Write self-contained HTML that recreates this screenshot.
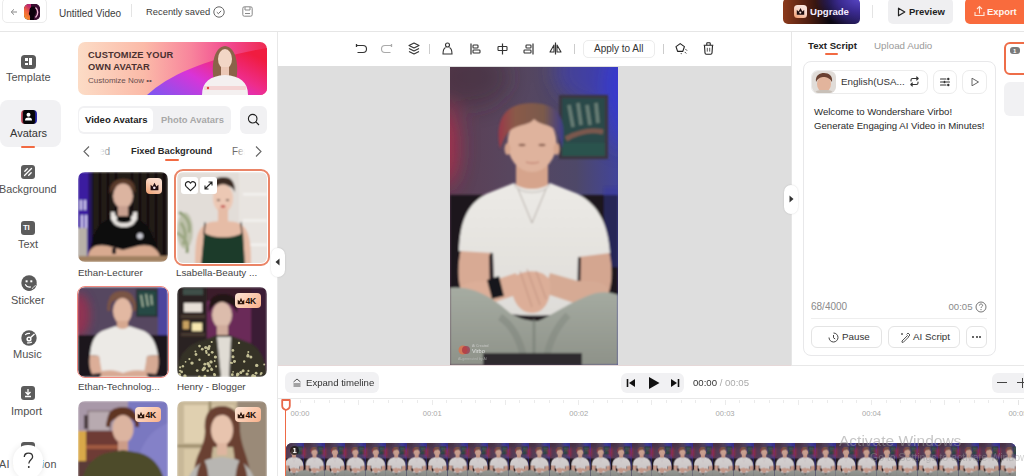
<!DOCTYPE html>
<html><head><meta charset="utf-8">
<style>
*{box-sizing:border-box;margin:0;padding:0}
html,body{width:1024px;height:476px;overflow:hidden;background:#fff}
body{position:relative;font-family:"Liberation Sans",sans-serif;color:#333}
.a{position:absolute}
.t{position:absolute;white-space:nowrap;line-height:1}
svg{display:block}
</style></head><body>

<!-- ============ HEADER ============ -->
<div class="a" style="left:0;top:31px;width:1024px;height:1px;background:#e6e6e6"></div>
<div class="a" style="left:2px;top:-2px;width:45px;height:25px;border:1px solid #ececec;border-radius:5px"></div>
<svg class="a" style="left:10px;top:8px" width="8" height="8" viewBox="0 0 8 8"><path d="M7 4H1.5M4 1.3L1.2 4 4 6.7" fill="none" stroke="#888" stroke-width="1"/></svg>
<div class="a" style="left:24px;top:4px;width:15.5px;height:15.5px;border-radius:5px;overflow:hidden;background:#3a1030"><svg width="16" height="16" viewBox="0 0 16 16"><defs><linearGradient id="lg1" x1="0" y1="1" x2="0.4" y2="0"><stop offset="0" stop-color="#f8a020"/><stop offset="0.6" stop-color="#f06040"/><stop offset="1" stop-color="#c02a70"/></linearGradient><filter id="lgb"><feGaussianBlur stdDeviation="0.35"/></filter></defs><g filter="url(#lgb)"><rect width="16" height="16" fill="#3a1030"/><rect width="7" height="16" fill="url(#lg1)"/><path d="M6 16C6 13 6.5 12 5 10.5 4.5 9 5.5 8.5 5.5 7 5.5 3.5 7.5 2.5 9.5 2.5 11 2.5 12 4 12 6.5 12 9 11 11 10 12.5L10 16Z" fill="#0a0408"/><path d="M11.5 3.5C14.5 6 14.5 10.5 11.5 13.5" fill="none" stroke="#f4b8d8" stroke-width="1.3"/></g></svg></div>
<div class="t" style="left:59px;top:8.5px;font-size:10px;color:#3c3c3c">Untitled Video</div>
<div class="a" style="left:131px;top:4px;width:1px;height:13px;background:#e4e4e4"></div>
<div class="t" style="left:146px;top:7px;font-size:9.4px;color:#3c3c3c">Recently saved</div>
<svg class="a" style="left:213px;top:6px" width="12" height="12" viewBox="0 0 12 12"><circle cx="6" cy="6" r="5.2" fill="none" stroke="#555" stroke-width="0.9"/><path d="M3.8 6.2l1.6 1.5 2.8-2.9" fill="none" stroke="#555" stroke-width="0.9"/></svg>
<svg class="a" style="left:242px;top:6px" width="11" height="11" viewBox="0 0 11 11"><rect x="0.8" y="0.8" width="9.4" height="9.4" rx="1.5" fill="none" stroke="#888" stroke-width="1"/><path d="M3 1v3h5V1M3 7.5h5" fill="none" stroke="#888" stroke-width="1"/></svg>

<div class="a" style="left:783px;top:-2px;width:77px;height:25.5px;border-radius:5px;background:radial-gradient(ellipse 60px 40px at 100% 0%,#5a48c8 0%,#3a2a90 35%,transparent 75%),linear-gradient(90deg,#8c3a1c 0%,#4a1c10 35%,#0c0810 60%,#201850 100%)"></div>
<div class="a" style="left:794px;top:5px;width:13px;height:13px;border-radius:3.5px;background:linear-gradient(30deg,#f09868,#f8d8cc 55%,#faeae4)"></div>
<svg class="a" style="left:796px;top:7px" width="9" height="9" viewBox="0 0 9 9"><path d="M0.8 7.8V3L2.7 4.6 4.5 1 6.3 4.6 8.2 3V7.8Z" fill="#1a0a0c"/><circle cx="4.3" cy="5.6" r="1.1" fill="#f0dcd8"/></svg>
<div class="t" style="left:810px;top:7px;font-size:9.6px;font-weight:700;color:#f4eeff">Upgrade</div>
<div class="a" style="left:872px;top:5px;width:1px;height:13px;background:#e4e4e4"></div>
<div class="a" style="left:888px;top:-2px;width:65px;height:25.5px;border-radius:5px;background:#efeff1"></div>
<svg class="a" style="left:897px;top:7px" width="9" height="10" viewBox="0 0 9 10"><path d="M1.5 1.2L7.8 5 1.5 8.8Z" fill="none" stroke="#222" stroke-width="1.2" stroke-linejoin="round"/></svg>
<div class="t" style="left:909px;top:7px;font-size:9.5px;font-weight:700;color:#1e1e1e">Preview</div>
<div class="a" style="left:965px;top:-2px;width:70px;height:25.5px;border-radius:5px;background:#f96b3d"></div>
<svg class="a" style="left:974px;top:5px" width="11" height="12" viewBox="0 0 11 12"><path d="M5.5 8.5V1.5M3 4l2.5-2.5L8 4M1 7v3.5h9V7" fill="none" stroke="#ffe6d8" stroke-width="1.1"/></svg>
<div class="t" style="left:987px;top:7px;font-size:9.4px;font-weight:700;color:#fff5ee">Export</div>

<!-- ============ LEFT NAV ============ -->
<div class="a" style="left:0;top:100px;width:61px;height:47px;border-radius:8px;background:#f1f1f3"></div>
<div class="a" style="left:21px;top:146px;width:14px;height:2px;border-radius:1px;background:#f26a42"></div>
<!-- template -->
<div class="a" style="left:21.3px;top:54.6px;width:14.4px;height:14px;border-radius:3.5px;background:#5a5a5a"></div>
<div class="a" style="left:25px;top:58px;width:2.6px;height:2.8px;background:#fff"></div><div class="a" style="left:25px;top:63px;width:2.6px;height:2.4px;background:#fff"></div><div class="a" style="left:29.4px;top:58px;width:2.5px;height:7.4px;background:#fff"></div>
<div class="t" style="left:6px;top:72px;font-size:11px;color:#505050">Template</div>
<!-- avatars -->
<div class="a" style="left:20.5px;top:110px;width:16px;height:14px;border-radius:4px;background:linear-gradient(90deg,#e06070,#300a14 25%,#050508 45%,#050508 70%,#3030c0)"></div>
<div class="a" style="left:22.5px;top:110px;width:12px;height:14px;border-radius:3px;background:#050508"></div>
<svg class="a" style="left:23px;top:111px" width="11" height="11" viewBox="0 0 11 11"><circle cx="5.5" cy="3.8" r="2" fill="#fff"/><path d="M2 9.5C2 7 3.5 6.4 5.5 6.4S9 7 9 9.5Z" fill="#fff"/></svg>
<div class="t" style="left:10px;top:128px;font-size:11px;color:#333">Avatars</div>
<!-- background -->
<div class="a" style="left:21px;top:165px;width:14px;height:14px;border-radius:3px;background:#5c5c5c"></div>
<svg class="a" style="left:21px;top:165px" width="14" height="14" viewBox="0 0 14 14"><path d="M3.8 6.3L6.3 3.8M3.5 10.5L10.5 3.5M7.7 10.2L10.2 7.7" stroke="#fff" stroke-width="1.3" stroke-linecap="round"/></svg>
<div class="t" style="left:-1px;top:184px;font-size:10.8px;color:#505050">Background</div>
<!-- text -->
<div class="a" style="left:21px;top:221px;width:14px;height:14px;border-radius:3px;background:#5c5c5c"></div>
<div class="t" style="left:23px;top:224px;font-size:8px;font-weight:700;color:#fff;letter-spacing:-0.3px">TI</div>
<div class="t" style="left:18px;top:239px;font-size:11px;color:#505050">Text</div>
<!-- sticker -->
<svg class="a" style="left:20.5px;top:275px" width="16" height="16" viewBox="0 0 16 16"><path d="M8 0.3A7.7 7.7 0 1 1 3 13.8L5 12 Q8 14 11 11.5 Q12.5 10 15.6 9 A7.7 7.7 0 0 0 8 0.3Z" fill="#5a5a5a"/><circle cx="8" cy="8" r="7.7" fill="#5a5a5a"/><rect x="4.6" y="5.3" width="2" height="2" fill="#fff"/><rect x="9.3" y="5.3" width="2" height="2" fill="#fff"/><path d="M4.5 9.8Q6 12.6 9.3 12" fill="none" stroke="#fff" stroke-width="1.3" stroke-linecap="round"/><path d="M15 10.5Q12.5 11 11 14" fill="none" stroke="#fff" stroke-width="0.7"/></svg>
<div class="t" style="left:11px;top:295px;font-size:11px;color:#505050">Sticker</div>
<!-- music -->
<svg class="a" style="left:20.5px;top:330px" width="16" height="16" viewBox="0 0 16 16"><circle cx="8" cy="8" r="7.7" fill="#5a5a5a"/><path d="M4.5 4.6Q6 3.3 8.5 3.4M6.5 12.8Q8.5 13.3 10.5 12.2" fill="none" stroke="#fff" stroke-width="1.2" stroke-linecap="round"/><circle cx="8" cy="9" r="2.6" fill="#fff"/><path d="M8 9L13.5 4" stroke="#fff" stroke-width="1.4"/><circle cx="8" cy="9" r="1.1" fill="#5a5a5a"/></svg>
<div class="t" style="left:13px;top:349px;font-size:11px;color:#505050">Music</div>
<!-- import -->
<div class="a" style="left:21px;top:386px;width:14px;height:14px;border-radius:3px;background:#5c5c5c"></div>
<svg class="a" style="left:21px;top:386px" width="14" height="14" viewBox="0 0 14 14"><path d="M7 3v5M4.5 6L7 8.5 9.5 6M4 10.5h6" fill="none" stroke="#fff" stroke-width="1.3"/></svg>
<div class="t" style="left:11px;top:406px;font-size:11px;color:#505050">Import</div>
<!-- ai creation -->
<div class="a" style="left:21px;top:442px;width:14px;height:14px;border-radius:3px;background:#5c5c5c"></div>
<div class="t" style="left:-1px;top:459px;font-size:10.8px;color:#505050;letter-spacing:0.35px">AI Creation</div>
<div class="a" style="left:13px;top:445px;width:30px;height:34px;border-radius:15px;background:#fff;box-shadow:0 0 6px rgba(0,0,0,0.10)"></div>
<svg class="a" style="left:22px;top:452px" width="13" height="17" viewBox="0 0 13 17"><path d="M2.3 5C2.3 2.6 4.2 1.2 6.4 1.2 8.8 1.2 10.6 2.8 10.6 5 10.6 7.6 6.8 8.2 6.8 11.5" fill="none" stroke="#333" stroke-width="1.3"/><circle cx="6.8" cy="15" r="0.9" fill="#222"/></svg>


<!-- ============ LEFT PANEL ============ -->
<div class="a" style="left:277px;top:32px;width:1px;height:444px;background:#e8e8e8"></div>
<!-- banner -->
<div class="a" style="left:78px;top:42px;width:189px;height:53px;border-radius:7px;overflow:hidden">
 <svg width="189" height="53" viewBox="0 0 189 53"><defs>
 <linearGradient id="bn0" x1="0" y1="0" x2="1" y2="0"><stop offset="0" stop-color="#fcdcc6"/><stop offset="0.35" stop-color="#fbbaa8"/><stop offset="0.6" stop-color="#f8849c"/><stop offset="0.8" stop-color="#f24890"/><stop offset="1" stop-color="#ee2a50"/></linearGradient>
 <linearGradient id="bn1" x1="0" y1="1" x2="1" y2="0.3"><stop offset="0" stop-color="#7a58f2"/><stop offset="0.45" stop-color="#d834d8"/><stop offset="0.7" stop-color="#ee2c8a"/><stop offset="1" stop-color="#f01c40"/></linearGradient>
 <filter id="bl1" x="-20%" y="-20%" width="140%" height="140%"><feGaussianBlur stdDeviation="0.7"/></filter></defs>
 <rect width="189" height="53" fill="url(#bn0)"/>
 <path d="M69 53C92 32 130 16 189 6V53Z" fill="url(#bn1)"/>
 <g filter="url(#bl1)">
 <path d="M136 38C133 26 135 5 147 4 159 5 161 26 158 38Z" fill="#8a6448"/>
 <ellipse cx="147" cy="17" rx="7" ry="10" fill="#f2d6c6"/>
 <rect x="143" y="25" width="8" height="10" fill="#ecc8b6"/>
 <path d="M124 53C124 40 132 34 147 33 162 34 170 40 170 53Z" fill="#f4f0f0"/>
 <rect x="126" y="44" width="42" height="4" rx="1" fill="#f4d4d4"/>
 <circle cx="130" cy="46" r="1.2" fill="#e04040"/>
 </g>
 </svg>
</div>
<div class="t" style="left:88px;top:51px;font-size:9.3px;font-weight:700;color:#4a3030;letter-spacing:0.1px">CUSTOMIZE YOUR</div>
<div class="t" style="left:88px;top:63px;font-size:9.3px;font-weight:700;color:#4a3030;letter-spacing:0.1px">OWN AVATAR</div>
<div class="t" style="left:88px;top:77px;font-size:8px;color:#6a5050">Customize Now ••</div>
<!-- tabs -->
<div class="a" style="left:78px;top:106px;width:153px;height:28px;border-radius:6px;background:#f1f1f3"></div>
<div class="a" style="left:79px;top:108px;width:74px;height:24px;border-radius:5px;background:#fff"></div>
<div class="t" style="left:85px;top:115px;font-size:9.5px;font-weight:700;color:#222">Video Avatars</div>
<div class="t" style="left:161px;top:115px;font-size:9.4px;font-weight:700;color:#a8a8a8">Photo Avatars</div>
<div class="a" style="left:240px;top:106px;width:27px;height:28px;border-radius:6px;background:#f1f1f3"></div>
<svg class="a" style="left:247px;top:113px" width="13" height="13" viewBox="0 0 13 13"><circle cx="5.7" cy="5.7" r="4.3" fill="none" stroke="#222" stroke-width="1.1"/><path d="M9 9l3 3" stroke="#222" stroke-width="1.1"/></svg>
<!-- category -->
<svg class="a" style="left:82px;top:145px" width="9" height="13" viewBox="0 0 9 13"><path d="M7 1.5L2 6.5 7 11.5" fill="none" stroke="#666" stroke-width="1.1"/></svg>
<div class="t" style="left:99px;top:146.5px;font-size:10px;color:#6a6a6a">ed</div>
<div class="a" style="left:92px;top:140px;width:20px;height:20px;background:linear-gradient(90deg,#fff 40%,rgba(255,255,255,0) 100%)"></div>
<div class="t" style="left:131px;top:147px;font-size:9.3px;font-weight:700;color:#2a2a2a">Fixed Background</div>
<div class="a" style="left:165px;top:159px;width:14px;height:2px;border-radius:1px;background:#f26a42"></div>
<div class="t" style="left:232px;top:146.5px;font-size:10px;color:#6a6a6a">Fea</div>
<div class="a" style="left:236px;top:140px;width:18px;height:20px;background:linear-gradient(90deg,rgba(255,255,255,0),#fff 50%)"></div>
<svg class="a" style="left:254px;top:145px" width="9" height="13" viewBox="0 0 9 13"><path d="M2 1.5L7 6.5 2 11.5" fill="none" stroke="#666" stroke-width="1.1"/></svg>
<div class="a" style="left:78px;top:172px;width:90px;height:90px;border-radius:7px;overflow:hidden;"><svg width="90" height="90" viewBox="0 0 90 90" preserveAspectRatio="none"><defs><filter id="f1" x="-10%" y="-10%" width="120%" height="120%"><feGaussianBlur stdDeviation="1.2"/></filter></defs><g filter="url(#f1)">
<rect width="90" height="90" fill="#241a18"/>
<path d="M14 0V90M22 0V90M30 0V90M38 0V90M54 0V90M62 0V90M70 0V90M78 0V90M86 0V90" stroke="#120c0c" stroke-width="3"/>
<rect x="0" y="0" width="11" height="90" fill="#3a1aa0"/>
<rect x="10" y="0" width="4" height="90" fill="#2a1870" opacity="0.8"/>
<path d="M3 28L3 38M7 28L7 38M4 43V56M8 43V56" stroke="#e8e0ff" stroke-width="1.8"/>
<rect x="0" y="56" width="9" height="34" fill="#b8b0a8"/>
<path d="M32 22C31 10 38 7 46 7 54 7 58 11 57 22 55 16 50 14 45 14 40 14 35 16 32 22Z" fill="#5a3a2a"/>
<ellipse cx="45" cy="24" rx="10" ry="12.5" fill="#dcb4a0"/>
<rect x="40" y="34" width="10" height="10" fill="#c8a090"/>
<path d="M12 90C12 62 20 50 34 46L45 44 56 46C70 50 78 62 80 90Z" fill="#0e0c10"/>
<path d="M35 40C34 50 39 53 46 53 53 53 58 50 57 40" fill="none" stroke="#e4e0dc" stroke-width="4"/>
<circle cx="36" cy="46" r="3" fill="#ece8e4"/><circle cx="56" cy="46" r="3" fill="#ece8e4"/>
<circle cx="62" cy="64" r="3" fill="#c8c8d0"/>
<path d="M10 84C12 74 20 72 30 74L45 78 60 74C70 72 78 74 82 84Z" fill="#d8aa90"/>
<rect x="0" y="84" width="90" height="6" fill="#a08060"/>
<rect x="34" y="76" width="4" height="6" fill="#18181a"/>
</g></svg></div>
<div class="a" style="left:146px;top:178px;width:16px;height:16px;border-radius:4px;background:linear-gradient(30deg,#f0a070,#f8d4c0 60%,#fae0d4)"></div><svg class="a" style="left:149.5px;top:181.5px" width="9" height="9" viewBox="0 0 9 9"><path d="M0.6 8.2V2.8L2.6 4.6 4.5 0.8 6.4 4.6 8.4 2.8V8.2Z" fill="#1e0c10"/><circle cx="4.3" cy="5.8" r="1.3" fill="#f4e8f0"/></svg><div class="t" style="left:78px;top:268px;font-size:9.8px;color:#444">Ethan-Lecturer</div>
<div class="a" style="left:174px;top:169px;width:96px;height:97px;border-radius:9px;border:2px solid #ea8466"></div>
<div class="a" style="left:177px;top:172px;width:90px;height:91px;border-radius:6px;overflow:hidden;"><svg width="90" height="91" viewBox="0 0 90 90" preserveAspectRatio="none"><defs><filter id="f2" x="-10%" y="-10%" width="120%" height="120%"><feGaussianBlur stdDeviation="1.2"/></filter></defs><g filter="url(#f2)">
<rect width="92" height="92" fill="#e2ddd8"/>
<rect x="62" y="0" width="30" height="92" fill="#e8e4e0"/>
<path d="M66 22H90M66 48H90M66 72H90" stroke="#f6f4f2" stroke-width="2"/>
<path d="M2 40C10 44 14 50 12 60M4 50C8 56 10 64 6 72M0 60C6 64 12 68 10 80" stroke="#8a9a70" stroke-width="3" fill="none"/>
<ellipse cx="8" cy="58" rx="8" ry="18" fill="#a8b090" opacity="0.6"/>
<path d="M34 20C33 9 39 5 46 5 54 5 58 9 58 20 56 15 52 13 46 13 40 13 36 15 34 20Z" fill="#3a2a22"/>
<ellipse cx="46" cy="26" rx="10" ry="14" fill="#ecc8b4"/>
<rect x="41" y="36" width="10" height="14" fill="#e6bca6"/>
<path d="M18 92C18 66 20 54 32 50 40 48 52 48 60 50 72 54 74 66 74 92Z" fill="#e6bca6"/>
<path d="M24 92L27 60C36 66 56 66 66 60L68 92Z" fill="#1c3a2a"/>
<path d="M27 62L28 50M65 62L64 50" stroke="#1a1a1a" stroke-width="1.3"/>
<path d="M40 28H43M49 28H52" stroke="#4a3028" stroke-width="1.4"/>
<ellipse cx="46" cy="34" rx="2.5" ry="1.2" fill="#c04040"/>
</g></svg></div>
<div class="a" style="left:181px;top:177px;width:17px;height:17px;border-radius:3px;background:#fff"></div><svg class="a" style="left:183.5px;top:180px" width="13" height="12" viewBox="0 0 13 12"><path d="M6.5 10.6L2.3 6.6C0.9 5.2 1.1 2.6 3.2 1.9 4.7 1.4 5.9 2.2 6.5 3.2 7.1 2.2 8.3 1.4 9.8 1.9 11.9 2.6 12.1 5.2 10.7 6.6Z" fill="none" stroke="#222" stroke-width="1.2" stroke-linejoin="round"/></svg>
<div class="a" style="left:200px;top:177px;width:17px;height:17px;border-radius:3px;background:#fff"></div><svg class="a" style="left:202px;top:179px" width="13" height="13" viewBox="0 0 13 13"><path d="M3 10L10 3M6.5 3H10V6.5M3 6.5V10H6.5" fill="none" stroke="#222" stroke-width="1.1"/></svg>
<div class="t" style="left:176px;top:268px;font-size:9.8px;color:#444">Lsabella-Beauty ...</div>
<div class="a" style="left:78px;top:287px;width:90px;height:90px;border-radius:7px;overflow:hidden;"><svg width="90" height="90" viewBox="0 0 90 90" preserveAspectRatio="none"><defs><filter id="f3" x="-10%" y="-10%" width="120%" height="120%"><feGaussianBlur stdDeviation="1.2"/></filter><filter id="gl3" x="-100%" y="-100%" width="300%" height="300%"><feGaussianBlur stdDeviation="5"/></filter></defs><g filter="url(#f3)">
<rect width="90" height="90" fill="#564660"/>
<ellipse cx="0" cy="28" rx="12" ry="22" fill="#b8284a" opacity="0.6" filter="url(#gl3)"/>
<rect x="80" y="0" width="10" height="60" fill="#4a44b8" opacity="0.7"/>
<rect x="58" y="2" width="22" height="28" fill="#2c3234"/>
<rect x="60" y="4" width="18" height="24" fill="#284a44"/>
<path d="M63 8L65 20M68 7L70 19M73 8L74 18" stroke="#b0c0a8" stroke-width="1.5"/>
<rect x="0" y="48" width="90" height="42" fill="#1c181e"/>
<path d="M31 20C29 8 36 4 44 4 52 4 58 8 56 20 54 14 50 12 44 12 38 12 33 14 31 20Z" fill="#7a5444"/>
<ellipse cx="44.5" cy="24" rx="9.5" ry="13" fill="#e2b8a2"/>
<path d="M31 24C30 16 33 10 40 8M56 24C58 16 55 10 48 8" stroke="#7a5444" stroke-width="3" fill="none"/>
<rect x="39" y="34" width="11" height="8" fill="#d6a890"/>
<path d="M12 68C13 56 16 48 24 44L38 39C41 43 48 43 51 39L66 44C74 48 78 56 80 68L69 69 68 86H22L21 69Z" fill="#eceae6"/>
<path d="M12 68L21 69 24 86 14 87C11 80 11 74 12 68Z" fill="#dcae98"/>
<path d="M80 68L69 69 66 86 78 87C81 80 81 74 80 68Z" fill="#d6aa94"/>
<path d="M24 84C34 82 40 84 45 86 50 84 56 82 68 84L70 90H22Z" fill="#d8aa94"/>
</g></svg></div>
<div class="a" style="left:77px;top:286px;width:92px;height:92px;border-radius:8px;border:1px solid #f08a80"></div>
<div class="t" style="left:78px;top:382px;font-size:9.8px;color:#444">Ethan-Technolog...</div>
<div class="a" style="left:177px;top:287px;width:90px;height:90px;border-radius:7px;overflow:hidden;"><svg width="90" height="90" viewBox="0 0 90 90" preserveAspectRatio="none"><defs><filter id="f4" x="-10%" y="-10%" width="120%" height="120%"><feGaussianBlur stdDeviation="1.2"/></filter></defs><g filter="url(#f4)">
<rect width="90" height="90" fill="#2e2022"/>
<rect x="30" y="0" width="60" height="90" fill="#6a2a58"/><rect x="30" y="0" width="60" height="14" fill="#3a1a2a"/>
<rect x="74" y="0" width="16" height="90" fill="#3a1e34"/>
<rect x="0" y="0" width="30" height="90" fill="#2a2220"/>
<rect x="6" y="2" width="20" height="6" fill="#405048"/>
<rect x="7" y="16" width="18" height="9" fill="#e8e0d8"/>
<rect x="4" y="28" width="24" height="3" fill="#4a3a30"/>
<rect x="6" y="34" width="6" height="8" fill="#c8a060"/>
<rect x="15" y="36" width="10" height="8" fill="#f8e8b0"/>
<rect x="4" y="46" width="24" height="3" fill="#4a3a30"/>
<path d="M32 26C30 12 38 7 46 7 56 7 62 12 60 26 57 18 52 16 46 16 40 16 35 18 32 26Z" fill="#221614"/>
<ellipse cx="45" cy="28" rx="10" ry="13" fill="#dcbcac"/>
<rect x="40" y="38" width="11" height="12" fill="#d0ac9c"/>
<path d="M0 90C0 70 8 58 24 54L40 48 52 48 68 54C82 58 88 70 90 90Z" fill="#343228"/>
<path d="M40 50L44 90H52L54 50Z" fill="#e0dcd4"/>
</g>
<g opacity="0.85" fill="#dcd8a8"><circle cx="22.5" cy="72.7" r="1.2"/><circle cx="53.9" cy="75.8" r="1.0"/><circle cx="3.1" cy="83.8" r="1.1"/><circle cx="22.2" cy="89.8" r="1.3"/><circle cx="73.9" cy="70.1" r="1.5"/><circle cx="15.0" cy="76.1" r="1.7"/><circle cx="67.2" cy="74.5" r="1.2"/><circle cx="4.7" cy="84.9" r="1.3"/><circle cx="63.8" cy="85.4" r="1.5"/><circle cx="70.9" cy="68.9" r="1.7"/><circle cx="55.9" cy="63.4" r="1.4"/><circle cx="35.2" cy="65.3" r="1.4"/><circle cx="60.7" cy="87.3" r="1.7"/><circle cx="87.2" cy="77.5" r="1.0"/><circle cx="76.0" cy="88.7" r="1.7"/><circle cx="20.2" cy="83.6" r="1.4"/><circle cx="75.4" cy="89.6" r="1.0"/><circle cx="70.9" cy="67.6" r="1.0"/><circle cx="27.3" cy="81.2" r="1.7"/><circle cx="5.9" cy="79.3" r="1.2"/><circle cx="77.8" cy="89.3" r="1.4"/><circle cx="8.6" cy="74.8" r="0.9"/><circle cx="19.0" cy="67.5" r="1.4"/><circle cx="84.4" cy="86.1" r="1.2"/><circle cx="57.4" cy="74.6" r="1.4"/><circle cx="55.3" cy="87.7" r="1.4"/><circle cx="39.1" cy="79.4" r="1.1"/><circle cx="27.9" cy="89.2" r="1.4"/><circle cx="37.7" cy="74.0" r="0.9"/><circle cx="55.0" cy="76.0" r="1.0"/><circle cx="56.0" cy="69.7" r="1.5"/><circle cx="32.3" cy="78.9" r="1.6"/><circle cx="60.1" cy="88.6" r="1.1"/><circle cx="29.5" cy="65.8" r="1.2"/><circle cx="33.7" cy="74.6" r="1.2"/><circle cx="34.4" cy="81.3" r="0.9"/><circle cx="28.7" cy="60.5" r="1.6"/><circle cx="22.5" cy="59.1" r="1.3"/><circle cx="62.0" cy="55.9" r="1.2"/><circle cx="30.7" cy="83.7" r="1.3"/><circle cx="31.0" cy="76.7" r="1.7"/><circle cx="12.4" cy="72.1" r="1.1"/><circle cx="71.4" cy="83.9" r="1.1"/><circle cx="26.0" cy="82.7" r="1.5"/><circle cx="71.3" cy="65.1" r="1.0"/><circle cx="27.1" cy="82.2" r="1.1"/><circle cx="31.8" cy="67.8" r="1.3"/><circle cx="37.2" cy="87.0" r="1.0"/><circle cx="2.4" cy="87.8" r="1.7"/><circle cx="83.7" cy="87.2" r="1.1"/><circle cx="66.1" cy="83.8" r="1.5"/><circle cx="31.3" cy="60.6" r="1.0"/><circle cx="79.7" cy="78.4" r="1.7"/><circle cx="79.1" cy="86.2" r="1.4"/><circle cx="3.1" cy="80.3" r="1.1"/><circle cx="27.8" cy="77.2" r="1.4"/><circle cx="37.6" cy="87.7" r="1.5"/><circle cx="31.4" cy="61.6" r="1.7"/><circle cx="32.3" cy="59.5" r="1.4"/><circle cx="70.1" cy="87.0" r="1.6"/><circle cx="56.1" cy="84.8" r="0.9"/><circle cx="25.3" cy="62.2" r="1.4"/><circle cx="38.4" cy="70.0" r="1.6"/><circle cx="7.9" cy="89.0" r="1.7"/><circle cx="29.2" cy="64.0" r="1.2"/><circle cx="57.6" cy="74.3" r="1.2"/><circle cx="18.4" cy="64.5" r="1.0"/><circle cx="34.7" cy="55.0" r="1.1"/><circle cx="34.1" cy="75.0" r="1.6"/><circle cx="34.7" cy="82.4" r="1.5"/></g></svg></div>
<div class="a" style="left:234.5px;top:292.5px;width:26px;height:15.5px;border-radius:4px;background:linear-gradient(135deg,#fde6d6,#f8b08a)"></div><svg class="a" style="left:237.0px;top:296.5px" width="8" height="8" viewBox="0 0 9 9"><path d="M0.8 8.2V3.2L2.8 4.8 4.5 0.8 6.2 4.8 8.2 3.2V8.2Z" fill="#2a1208"/><circle cx="4.5" cy="6" r="1" fill="#f8e0d0"/></svg><div class="t" style="left:245.5px;top:296.5px;font-size:8.6px;font-weight:700;color:#1e0e08;letter-spacing:-0.2px">4K</div><div class="t" style="left:177px;top:382px;font-size:9.8px;color:#444">Henry - Blogger</div>
<div class="a" style="left:78px;top:401px;width:90px;height:90px;border-radius:7px;overflow:hidden;"><svg width="90" height="90" viewBox="0 0 90 90" preserveAspectRatio="none"><defs><filter id="f5" x="-10%" y="-10%" width="120%" height="120%"><feGaussianBlur stdDeviation="1.2"/></filter></defs><g filter="url(#f5)">
<rect width="90" height="90" fill="#a898a8"/>
<rect x="50" y="0" width="40" height="90" fill="#7a78c0"/>
<path d="M56 90C56 50 70 30 90 22V90Z" fill="#8e8ad0" opacity="0.5"/>
<rect x="10" y="10" width="22" height="20" fill="#b8aab0" stroke="#8a7a80" stroke-width="1.5"/>
<rect x="6" y="14" width="4" height="14" fill="#4a3a40"/>
<rect x="0" y="30" width="48" height="30" fill="#6e3a34"/>
<rect x="0" y="44" width="48" height="4" fill="#a05a40"/>
<rect x="0" y="30" width="8" height="50" fill="#d8a848"/>
<rect x="0" y="60" width="48" height="30" fill="#5a3a38"/>
<path d="M30 26C27 10 36 6 45 6 55 6 61 12 59 26 56 18 51 16 45 16 39 16 34 18 30 26Z" fill="#5e3424"/>
<ellipse cx="45" cy="28" rx="10.5" ry="14" fill="#dcb4a0"/>
<path d="M30 26C30 18 34 12 40 10M59 26C60 18 56 12 50 10" stroke="#5e3424" stroke-width="4" fill="none"/>
<rect x="40" y="40" width="10" height="12" fill="#cc9c88"/>
<path d="M2 90C4 68 14 56 28 52L45 49 62 52C76 56 86 68 88 90Z" fill="#4e4c2a"/>
</g></svg></div>
<div class="a" style="left:134.5px;top:406.5px;width:26px;height:15.5px;border-radius:4px;background:linear-gradient(135deg,#fde6d6,#f8b08a)"></div><svg class="a" style="left:137.0px;top:410.5px" width="8" height="8" viewBox="0 0 9 9"><path d="M0.8 8.2V3.2L2.8 4.8 4.5 0.8 6.2 4.8 8.2 3.2V8.2Z" fill="#2a1208"/><circle cx="4.5" cy="6" r="1" fill="#f8e0d0"/></svg><div class="t" style="left:145.5px;top:410.5px;font-size:8.6px;font-weight:700;color:#1e0e08;letter-spacing:-0.2px">4K</div><div class="a" style="left:177px;top:401px;width:90px;height:90px;border-radius:7px;overflow:hidden;"><svg width="90" height="90" viewBox="0 0 90 90" preserveAspectRatio="none"><defs><filter id="f6" x="-10%" y="-10%" width="120%" height="120%"><feGaussianBlur stdDeviation="1.2"/></filter></defs><g filter="url(#f6)">
<rect width="90" height="90" fill="#a09080"/>
<rect x="0" y="0" width="60" height="90" fill="#c8b898"/>
<rect x="7" y="4" width="24" height="38" fill="#e0d0b0"/>
<rect x="35" y="4" width="22" height="38" fill="#d8c8a8"/>
<rect x="7" y="48" width="24" height="42" fill="#d8c8a6"/>
<path d="M33 0V90M0 45H60" stroke="#988868" stroke-width="2.5"/>
<rect x="60" y="0" width="30" height="90" fill="#9a8a78"/>
<path d="M28 30C26 12 34 5 45 5 56 5 64 12 63 30 64 44 70 54 72 66 74 76 70 84 68 90H58C60 76 58 60 56 46L36 46C34 60 32 76 32 90H20C18 82 16 74 18 64 20 52 28 44 28 30Z" fill="#6a4030"/>
<ellipse cx="45" cy="29" rx="11" ry="15.5" fill="#e8c4ae"/>
<path d="M33 22C34 12 40 9 45 9 52 9 58 13 58 22 54 16 50 14 45 14 40 14 36 17 33 22Z" fill="#6a4030"/>
<rect x="40" y="42" width="10" height="12" fill="#deb6a0"/>
<path d="M8 90C10 72 20 62 32 58L45 56 58 58C70 62 78 72 80 90Z" fill="#b8b6b2"/>
<path d="M20 90C18 80 20 66 26 58 30 62 32 72 32 90Z M70 90C72 80 70 66 64 58 60 62 58 72 58 90Z" fill="#6a4030"/>
</g></svg></div>
<div class="a" style="left:234.5px;top:406.5px;width:26px;height:15.5px;border-radius:4px;background:linear-gradient(135deg,#fde6d6,#f8b08a)"></div><svg class="a" style="left:237.0px;top:410.5px" width="8" height="8" viewBox="0 0 9 9"><path d="M0.8 8.2V3.2L2.8 4.8 4.5 0.8 6.2 4.8 8.2 3.2V8.2Z" fill="#2a1208"/><circle cx="4.5" cy="6" r="1" fill="#f8e0d0"/></svg><div class="t" style="left:245.5px;top:410.5px;font-size:8.6px;font-weight:700;color:#1e0e08;letter-spacing:-0.2px">4K</div>


<!-- ============ CANVAS ============ -->
<div class="a" style="left:278px;top:66px;width:513px;height:299px;background:#dedede"></div>
<div class="a" style="left:278px;top:365px;width:513px;height:1px;background:#e6d8d8"></div>
<div class="a" style="left:791px;top:365px;width:233px;height:1px;background:#e8e8e8"></div>
<!-- toolbar icons -->
<svg class="a" style="left:354px;top:43px" width="14" height="12" viewBox="0 0 14 12"><path d="M2.5 2.5H9A3.5 3.5 0 0 1 9 9.5H3.5" fill="none" stroke="#333" stroke-width="1.1"/><path d="M2.5 1V4" stroke="#333" stroke-width="1.3"/></svg>
<svg class="a" style="left:380px;top:43px" width="14" height="12" viewBox="0 0 14 12"><path d="M11.5 2.5H5A3.5 3.5 0 0 0 5 9.5H10.5" fill="none" stroke="#aaa" stroke-width="1.1"/><path d="M11.5 1V4" stroke="#aaa" stroke-width="1.3"/></svg>
<svg class="a" style="left:408px;top:42px" width="12" height="13" viewBox="0 0 12 13"><path d="M6 1L11 3.5 6 6 1 3.5Z M1 6.5L6 9 11 6.5 M1 9.5L6 12 11 9.5" fill="none" stroke="#333" stroke-width="1.1" stroke-linejoin="round"/></svg>
<div class="a" style="left:429px;top:44px;width:1px;height:10px;background:#ccc"></div>
<svg class="a" style="left:442px;top:42px" width="11" height="13" viewBox="0 0 11 13"><circle cx="5.5" cy="3" r="2" fill="none" stroke="#333" stroke-width="1.1"/><path d="M3.5 5.5C1.5 6.5 1 8.5 1 12H10C10 8.5 9.5 6.5 7.5 5.5" fill="none" stroke="#333" stroke-width="1.1"/></svg>
<svg class="a" style="left:470px;top:43px" width="11" height="12" viewBox="0 0 11 12"><path d="M1 0.5V11.5" stroke="#333" stroke-width="1.2"/><rect x="3" y="2" width="5" height="3" rx="0.8" fill="none" stroke="#333" stroke-width="1.1"/><rect x="3" y="7" width="7" height="3" rx="0.8" fill="none" stroke="#333" stroke-width="1.1"/></svg>
<svg class="a" style="left:497px;top:43px" width="11" height="12" viewBox="0 0 11 12"><path d="M5.5 0.5V11.5" stroke="#333" stroke-width="1.2"/><rect x="1" y="3.5" width="9" height="4" rx="0.8" fill="none" stroke="#333" stroke-width="1.1"/></svg>
<svg class="a" style="left:523px;top:43px" width="11" height="12" viewBox="0 0 11 12"><path d="M10 0.5V11.5" stroke="#333" stroke-width="1.2"/><rect x="3" y="2" width="5" height="3" rx="0.8" fill="none" stroke="#333" stroke-width="1.1"/><rect x="1" y="7" width="7" height="3" rx="0.8" fill="none" stroke="#333" stroke-width="1.1"/></svg>
<svg class="a" style="left:549px;top:42px" width="13" height="13" viewBox="0 0 13 13"><path d="M6.5 0.5V12.5" stroke="#333" stroke-width="1.2"/><path d="M5 3L1 10H5Z M8 3L12 10H8Z" fill="none" stroke="#333" stroke-width="1.1" stroke-linejoin="round"/></svg>
<div class="a" style="left:574px;top:44px;width:1px;height:10px;background:#ccc"></div>
<div class="a" style="left:583px;top:40px;width:72px;height:18px;border:1px solid #ececec;border-radius:5px"></div>
<div class="t" style="left:594px;top:44px;font-size:10px;color:#333">Apply to All</div>
<div class="a" style="left:663px;top:44px;width:1px;height:10px;background:#ccc"></div>
<svg class="a" style="left:675px;top:42px" width="14" height="13" viewBox="0 0 14 13"><path d="M5.2 1.6L9.4 4.6 7.8 9.4H2.6L1 4.6Z" fill="none" stroke="#222" stroke-width="1.15" stroke-linejoin="round"/><path d="M10.6 7.2L11.8 8.4M10 10.2L11 11.2" stroke="#333" stroke-width="0.9" stroke-linecap="round"/><circle cx="6.2" cy="11.6" r="0.55" fill="#333"/></svg>
<svg class="a" style="left:703px;top:42px" width="11" height="13" viewBox="0 0 11 13"><path d="M0.7 3.3H10.3M3.8 3.2V1.3Q3.8 0.8 4.3 0.8H6.7Q7.2 0.8 7.2 1.3V3.2" fill="none" stroke="#222" stroke-width="1.1"/><path d="M1.5 3.5L2 11Q2.1 12.2 3.3 12.2H7.7Q8.9 12.2 9 11L9.5 3.5" fill="none" stroke="#222" stroke-width="1.1"/><path d="M4.3 5.8V9.6M6.7 5.8V9.6" stroke="#444" stroke-width="0.9"/></svg>
<!-- handles -->
<div class="a" style="left:271px;top:248px;width:14px;height:29px;border-radius:7px;background:#fff;box-shadow:0 0 2px rgba(0,0,0,0.15)"></div>
<svg class="a" style="left:275px;top:258px" width="5" height="8" viewBox="0 0 5 8"><path d="M4.5 0.5L0.5 4 4.5 7.5Z" fill="#333"/></svg>
<div class="a" style="left:784px;top:185px;width:14px;height:29px;border-radius:7px;background:#fff;box-shadow:0 0 2px rgba(0,0,0,0.15);z-index:5"></div>
<svg class="a" style="left:789px;top:195px;z-index:6" width="5" height="8" viewBox="0 0 5 8"><path d="M0.5 0.5L4.5 4 0.5 7.5Z" fill="#333"/></svg>
<div class="a" style="left:450px;top:67px;width:168px;height:298px;overflow:hidden">
<svg width="168" height="298" viewBox="0 0 168 298">
<defs>
<filter id="vb" x="-5%" y="-5%" width="110%" height="110%"><feGaussianBlur stdDeviation="1"/></filter>
<filter id="vb2" x="-50%" y="-50%" width="200%" height="200%"><feGaussianBlur stdDeviation="10"/></filter>
<linearGradient id="vbg" x1="0" y1="0" x2="1" y2="0"><stop offset="0" stop-color="#5c3e54"/><stop offset="0.35" stop-color="#58465e"/><stop offset="0.75" stop-color="#4e4868"/><stop offset="1" stop-color="#42449a"/></linearGradient>
<linearGradient id="vpants" x1="0" y1="0" x2="0" y2="1"><stop offset="0" stop-color="#a6aca2"/><stop offset="1" stop-color="#8e9289"/></linearGradient>
<linearGradient id="vshirt" x1="0" y1="0" x2="0" y2="1"><stop offset="0" stop-color="#eceae6"/><stop offset="1" stop-color="#dedcd8"/></linearGradient>
<linearGradient id="vhair" x1="0" y1="0" x2="1" y2="0"><stop offset="0" stop-color="#9a3848"/><stop offset="0.25" stop-color="#8a5a4a"/><stop offset="0.7" stop-color="#7a5a4c"/><stop offset="1" stop-color="#3e3c8a"/></linearGradient>
</defs>
<g id="vidg"><rect width="168" height="298" fill="url(#vbg)"/>
<g filter="url(#vb2)"><ellipse cx="-6" cy="80" rx="14" ry="40" fill="#c82848" opacity="0.7"/><ellipse cx="150" cy="5" rx="45" ry="35" fill="#3a3ac8" opacity="0.55"/><ellipse cx="172" cy="30" rx="16" ry="50" fill="#3438d8" opacity="0.8"/><ellipse cx="20" cy="10" rx="40" ry="30" fill="#3a2030" opacity="0.4"/></g>
<g filter="url(#vb)">
<!-- poster -->
<rect x="109" y="28" width="49" height="64" fill="#3a3440"/>
<rect x="112" y="31" width="43" height="58" fill="#2a4a4a"/>
<path d="M119 38L123 60M128 36L131 58M137 38L140 58M146 36L148 56" stroke="#90a090" stroke-width="3.5" opacity="0.6"/>
<path d="M116 72C126 66 140 62 153 65" stroke="#a06050" stroke-width="5" fill="none" opacity="0.7"/>
<rect x="112" y="76" width="43" height="13" fill="#2a5a50" opacity="0.6"/>
<!-- couch -->
<rect x="0" y="128" width="168" height="164" fill="#1c181c"/>
<rect x="154" y="120" width="14" height="80" fill="#3436a0" opacity="0.45"/>
<!-- neck -->
<path d="M66 96H98V120C92 128 72 128 66 120Z" fill="#d6a48c"/>
<!-- arms -->
<path d="M11 182L40 182 42 222 12 228C7 212 8 196 11 182Z" fill="#d8aa94"/>
<path d="M129 184L159 184C162 198 163 214 158 228L127 222Z" fill="#d4a690"/>
<!-- shirt -->
<path d="M39 188L46 190 45 232 40 230Z" fill="#2a2228"/><path d="M131 190L124 192 125 232 130 230Z" fill="#2a2228"/><path d="M9 184C10 156 16 138 36 127L64 116C72 124 92 124 100 116L128 127C148 138 158 156 160 186L128 190 127 244C110 250 60 250 45 244L43 186Z" fill="url(#vshirt)"/>
<path d="M64 117C70 128 94 128 100 117" fill="none" stroke="#d6d2ce" stroke-width="2"/>
<!-- forearms -->
<path d="M10 222C14 214 30 214 42 214L66 206 72 226 42 236C26 240 12 234 10 222Z" fill="#dcae98"/>
<path d="M159 224C156 214 142 214 128 214L100 206 94 226 124 236C140 240 156 236 159 224Z" fill="#d6aa94"/>
<!-- face -->
<ellipse cx="82" cy="76" rx="24.5" ry="29" fill="#dfb39d"/>
<ellipse cx="57.5" cy="82" rx="3" ry="6" fill="#d6a68e"/>
<ellipse cx="106.5" cy="82" rx="3" ry="6" fill="#d6a68e"/>
<path d="M50 82C44 50 57 36 82 36 107 36 118 50 112 82 110 72 108 66 104 62 98 57 90 58 84 52 80 58 70 57 62 62 57 66 53 72 50 82Z" fill="url(#vhair)"/>
<ellipse cx="72" cy="78" rx="3.5" ry="1.2" fill="#8a6050"/><ellipse cx="92" cy="78" rx="3.5" ry="1.2" fill="#8a6050"/>
<path d="M76 95C80 96.5 85 96.5 89 95" stroke="#c08070" stroke-width="1.3" fill="none"/>
<!-- pants -->
<path d="M0 221C24 218 44 232 60 246 70 252 78 254 88 254 100 250 120 234 146 226 156 224 164 226 168 228V298H0Z" fill="url(#vpants)"/>
<path d="M50 250C62 258 70 272 74 292" stroke="#7c827a" stroke-width="7" fill="none" opacity="0.5"/>
<path d="M118 248C108 258 100 272 96 292" stroke="#7c827a" stroke-width="7" fill="none" opacity="0.45"/>
<path d="M84 252V292" stroke="#767c74" stroke-width="3" opacity="0.6"/>
<rect x="33" y="286" width="99" height="12" fill="#2e2c2e"/>
<!-- hands -->
<path d="M62 214C66 202 94 200 100 214 102 230 96 246 82 246 68 246 60 230 62 214Z" fill="#dcae98"/>
<path d="M70 204L82 240M77 202L90 238M86 204L96 232" stroke="#b08070" stroke-width="1" opacity="0.6"/>
<!-- watch -->
<path d="M37 213L49 209 54 229 42 232Z" fill="#18181a"/>
<!-- necklace -->
<path d="M68 122L82 156 96 122" stroke="#a8a098" stroke-width="0.8" fill="none"/>
</g>
</g>
<!-- watermark -->
<circle cx="13" cy="283" r="4.5" fill="#e07048" opacity="0.8"/>
<circle cx="16" cy="283" r="4" fill="#a02040" opacity="0.6"/>
<text x="22" y="280" font-family="Liberation Sans" font-size="3.5" fill="#ddd" opacity="0.7">Ai Created</text>
<text x="22" y="286" font-family="Liberation Sans" font-size="5.5" fill="#eee" opacity="0.85">Virbo</text>
<text x="8" y="293" font-family="Liberation Sans" font-size="3.5" fill="#ccc" opacity="0.6">Al-generated by AI</text>
</svg></div>



<!-- ============ RIGHT PANEL ============ -->
<div class="a" style="left:791px;top:32px;width:1px;height:334px;background:#e6e6e6"></div>
<div class="t" style="left:808px;top:41px;font-size:9.6px;font-weight:700;color:#222">Text Script</div>
<div class="a" style="left:825px;top:53px;width:13px;height:2px;border-radius:1px;background:#f26a42"></div>
<div class="t" style="left:874px;top:41px;font-size:9.8px;color:#9a9a9a">Upload Audio</div>
<div class="a" style="left:803px;top:61px;width:193px;height:295px;border:1px solid #e8e8ea;border-radius:8px"></div>
<div class="a" style="left:811px;top:70px;width:117px;height:24px;border:1px solid #ececec;border-radius:7px"></div>
<div class="a" style="left:812px;top:71px;width:24px;height:22px;border-radius:6px;overflow:hidden"><svg width="24" height="22" viewBox="0 0 24 22"><defs><filter id="ab"><feGaussianBlur stdDeviation="0.7"/></filter></defs><g filter="url(#ab)"><rect width="24" height="22" fill="#e0dcd8"/><ellipse cx="12" cy="13" rx="7" ry="8.5" fill="#e2b49c"/><path d="M4 11C3 4 8 2 12 2 17 2 21 5 20 11 18 7 14 6 12 6 9 6 6 7 4 11Z" fill="#6a4030"/><path d="M3 22C4 19 7 19 12 19 17 19 20 19 21 22Z" fill="#c8c0b8"/></g></svg></div>
<div class="t" style="left:841px;top:77px;font-size:9.8px;color:#333">English(USA...</div>
<svg class="a" style="left:909px;top:76px" width="11" height="11" viewBox="0 0 11 11"><path d="M2 5V4C2 3 2.8 2.5 3.6 2.5H9M7.6 1L9.2 2.5 7.6 4M9 6V7C9 8 8.2 8.5 7.4 8.5H2M3.4 10L1.8 8.5 3.4 7" fill="none" stroke="#333" stroke-width="1.1" stroke-linecap="round" stroke-linejoin="round"/></svg>
<div class="a" style="left:933px;top:70px;width:24px;height:24px;border:1px solid #ececec;border-radius:7px"></div>
<svg class="a" style="left:939px;top:76px" width="12" height="12" viewBox="0 0 12 12"><path d="M1.5 3H7M1.5 6H4M7 6H10.5M1.5 9H7" stroke="#333" stroke-width="1.1" stroke-linecap="round"/><circle cx="9.3" cy="3" r="1.2" fill="#333"/><circle cx="5.5" cy="6" r="1.2" fill="#333"/><circle cx="9.3" cy="9" r="1.2" fill="#333"/></svg>
<div class="a" style="left:962px;top:70px;width:25px;height:24px;border:1px solid #ececec;border-radius:7px"></div>
<svg class="a" style="left:970px;top:77px" width="10" height="10" viewBox="0 0 10 10"><path d="M2 1.2L8.5 5 2 8.8Z" fill="none" stroke="#666" stroke-width="1" stroke-linejoin="round"/></svg>
<div class="t" style="left:814px;top:107px;font-size:9.6px;color:#2a2a2a">Welcome to Wondershare Virbo!</div>
<div class="t" style="left:814px;top:121px;font-size:9.6px;color:#2a2a2a">Generate Engaging AI Video in Minutes!</div>
<div class="t" style="left:811px;top:301.5px;font-size:10px;color:#8a8a8a">68/4000</div>
<div class="t" style="left:948.5px;top:301.5px;font-size:9.6px;color:#8a8a8a">00:05</div>
<svg class="a" style="left:975px;top:301px" width="12" height="12" viewBox="0 0 12 12"><circle cx="6" cy="6" r="5" fill="none" stroke="#666" stroke-width="0.9"/><path d="M4.4 4.6C4.4 3.5 5.2 3 6 3S7.6 3.5 7.6 4.5C7.6 5.6 6 5.7 6 7" fill="none" stroke="#666" stroke-width="0.9"/><circle cx="6" cy="8.6" r="0.6" fill="#666"/></svg>
<div class="a" style="left:811px;top:318px;width:176px;height:1px;background:#eeeeee"></div>
<div class="a" style="left:811px;top:326px;width:71px;height:22px;border:1px solid #e4e4e4;border-radius:6px"></div>
<svg class="a" style="left:828px;top:332px" width="11" height="11" viewBox="0 0 11 11"><path d="M5.5 1A4.5 4.5 0 1 1 1 5.5" fill="none" stroke="#444" stroke-width="1"/><path d="M5.5 3V5.8L7.2 7" fill="none" stroke="#444" stroke-width="1"/></svg>
<div class="t" style="left:842px;top:332px;font-size:9.8px;color:#333">Pause</div>
<div class="a" style="left:888px;top:326px;width:72px;height:22px;border:1px solid #e4e4e4;border-radius:6px"></div>
<svg class="a" style="left:900px;top:332px" width="11" height="11" viewBox="0 0 11 11"><path d="M2 9L7.5 3.5 8.8 4.8 3.3 10.3H2Z M6.5 2.5L8 1 10 3 8.5 4.5" fill="none" stroke="#444" stroke-width="0.9"/><path d="M1 2h2M2 1v2" stroke="#444" stroke-width="0.8"/></svg>
<div class="t" style="left:913px;top:332px;font-size:9.8px;color:#333">AI Script</div>
<div class="a" style="left:966px;top:326px;width:21px;height:22px;border:1px solid #e4e4e4;border-radius:6px"></div>
<div class="a" style="left:972px;top:336px;width:2px;height:2px;border-radius:1px;background:#333"></div><div class="a" style="left:975.5px;top:336px;width:2px;height:2px;border-radius:1px;background:#333"></div><div class="a" style="left:979px;top:336px;width:2px;height:2px;border-radius:1px;background:#333"></div>
<!-- right strip -->
<div class="a" style="left:1004px;top:42px;width:30px;height:33px;border:2px solid #ee6d48;border-radius:6px"></div>
<div class="a" style="left:1010px;top:47px;width:10px;height:7px;border-radius:3px;background:#7a7a7a"></div>
<div class="t" style="left:1013px;top:47.5px;font-size:6px;font-weight:700;color:#fff">1</div>
<div class="a" style="left:1004px;top:82px;width:30px;height:34px;border-radius:6px;background:#f1f1f3"></div>


<!-- ============ TIMELINE ============ -->
<div class="a" style="left:285px;top:372px;width:94px;height:21px;border-radius:6px;background:#f1f1f3"></div>
<svg class="a" style="left:292px;top:377px" width="10" height="10" viewBox="0 0 10 10"><path d="M1.5 5L5 2 8.5 5M1.5 7H8.5M1.5 9H8.5" fill="none" stroke="#555" stroke-width="1"/></svg>
<div class="t" style="left:306px;top:378px;font-size:9.6px;color:#333">Expand timeline</div>
<div class="a" style="left:621px;top:373px;width:63px;height:20px;border-radius:6px;background:#f1f1f3"></div>
<svg class="a" style="left:626px;top:378px" width="10" height="10" viewBox="0 0 10 10"><path d="M1.5 1V9" stroke="#111" stroke-width="1.6"/><path d="M9 1L3 5 9 9Z" fill="#111"/></svg>
<svg class="a" style="left:648px;top:376px" width="12" height="14" viewBox="0 0 12 14"><path d="M1 1L11.5 7 1 13Z" fill="#111"/></svg>
<svg class="a" style="left:670px;top:378px" width="10" height="10" viewBox="0 0 10 10"><path d="M8.5 1V9" stroke="#111" stroke-width="1.6"/><path d="M1 1L7 5 1 9Z" fill="#111"/></svg>
<div class="t" style="left:693px;top:378px;font-size:9.6px;color:#333">00:00 <span style="color:#aaa">/ 00:05</span></div>
<div class="a" style="left:992px;top:373px;width:40px;height:20px;border-radius:6px;background:#f1f1f3"></div>
<div class="a" style="left:997px;top:382px;width:10px;height:1.2px;background:#444"></div>
<div class="a" style="left:1017px;top:382px;width:10px;height:1.2px;background:#444"></div>
<div class="a" style="left:1021.5px;top:377.5px;width:1.2px;height:10px;background:#444"></div>
<div class="a" style="left:278px;top:398px;width:746px;height:1px;background:#e8e8e8"></div>
<div class="t" style="left:290.5px;top:410px;font-size:7.6px;color:#a8a8a8">00:00</div>
<div class="t" style="left:422.8px;top:410px;font-size:7.6px;color:#a8a8a8">00:01</div>
<div class="t" style="left:569.2px;top:410px;font-size:7.6px;color:#a8a8a8">00:02</div>
<div class="t" style="left:715.6px;top:410px;font-size:7.6px;color:#a8a8a8">00:03</div>
<div class="t" style="left:862.0px;top:410px;font-size:7.6px;color:#a8a8a8">00:04</div>
<div class="t" style="left:1008.4px;top:410px;font-size:7.6px;color:#a8a8a8">00:05</div>
<div class="a" style="left:285.0px;top:400px;width:1px;height:5px;background:#ebebeb"></div><div class="a" style="left:299.6px;top:400px;width:1px;height:3px;background:#ebebeb"></div><div class="a" style="left:314.3px;top:400px;width:1px;height:3px;background:#ebebeb"></div><div class="a" style="left:328.9px;top:400px;width:1px;height:3px;background:#ebebeb"></div><div class="a" style="left:343.6px;top:400px;width:1px;height:3px;background:#ebebeb"></div><div class="a" style="left:358.2px;top:400px;width:1px;height:5px;background:#ebebeb"></div><div class="a" style="left:372.9px;top:400px;width:1px;height:3px;background:#ebebeb"></div><div class="a" style="left:387.6px;top:400px;width:1px;height:3px;background:#ebebeb"></div><div class="a" style="left:402.2px;top:400px;width:1px;height:3px;background:#ebebeb"></div><div class="a" style="left:416.9px;top:400px;width:1px;height:3px;background:#ebebeb"></div><div class="a" style="left:431.5px;top:400px;width:1px;height:5px;background:#ebebeb"></div><div class="a" style="left:446.1px;top:400px;width:1px;height:3px;background:#ebebeb"></div><div class="a" style="left:460.8px;top:400px;width:1px;height:3px;background:#ebebeb"></div><div class="a" style="left:475.4px;top:400px;width:1px;height:3px;background:#ebebeb"></div><div class="a" style="left:490.1px;top:400px;width:1px;height:3px;background:#ebebeb"></div><div class="a" style="left:504.8px;top:400px;width:1px;height:5px;background:#ebebeb"></div><div class="a" style="left:519.4px;top:400px;width:1px;height:3px;background:#ebebeb"></div><div class="a" style="left:534.0px;top:400px;width:1px;height:3px;background:#ebebeb"></div><div class="a" style="left:548.7px;top:400px;width:1px;height:3px;background:#ebebeb"></div><div class="a" style="left:563.4px;top:400px;width:1px;height:3px;background:#ebebeb"></div><div class="a" style="left:578.0px;top:400px;width:1px;height:5px;background:#ebebeb"></div><div class="a" style="left:592.6px;top:400px;width:1px;height:3px;background:#ebebeb"></div><div class="a" style="left:607.3px;top:400px;width:1px;height:3px;background:#ebebeb"></div><div class="a" style="left:622.0px;top:400px;width:1px;height:3px;background:#ebebeb"></div><div class="a" style="left:636.6px;top:400px;width:1px;height:3px;background:#ebebeb"></div><div class="a" style="left:651.2px;top:400px;width:1px;height:5px;background:#ebebeb"></div><div class="a" style="left:665.9px;top:400px;width:1px;height:3px;background:#ebebeb"></div><div class="a" style="left:680.5px;top:400px;width:1px;height:3px;background:#ebebeb"></div><div class="a" style="left:695.2px;top:400px;width:1px;height:3px;background:#ebebeb"></div><div class="a" style="left:709.9px;top:400px;width:1px;height:3px;background:#ebebeb"></div><div class="a" style="left:724.5px;top:400px;width:1px;height:5px;background:#ebebeb"></div><div class="a" style="left:739.1px;top:400px;width:1px;height:3px;background:#ebebeb"></div><div class="a" style="left:753.8px;top:400px;width:1px;height:3px;background:#ebebeb"></div><div class="a" style="left:768.5px;top:400px;width:1px;height:3px;background:#ebebeb"></div><div class="a" style="left:783.1px;top:400px;width:1px;height:3px;background:#ebebeb"></div><div class="a" style="left:797.8px;top:400px;width:1px;height:5px;background:#ebebeb"></div><div class="a" style="left:812.4px;top:400px;width:1px;height:3px;background:#ebebeb"></div><div class="a" style="left:827.0px;top:400px;width:1px;height:3px;background:#ebebeb"></div><div class="a" style="left:841.7px;top:400px;width:1px;height:3px;background:#ebebeb"></div><div class="a" style="left:856.4px;top:400px;width:1px;height:3px;background:#ebebeb"></div><div class="a" style="left:871.0px;top:400px;width:1px;height:5px;background:#ebebeb"></div><div class="a" style="left:885.6px;top:400px;width:1px;height:3px;background:#ebebeb"></div><div class="a" style="left:900.3px;top:400px;width:1px;height:3px;background:#ebebeb"></div><div class="a" style="left:915.0px;top:400px;width:1px;height:3px;background:#ebebeb"></div><div class="a" style="left:929.6px;top:400px;width:1px;height:3px;background:#ebebeb"></div><div class="a" style="left:944.2px;top:400px;width:1px;height:5px;background:#ebebeb"></div><div class="a" style="left:958.9px;top:400px;width:1px;height:3px;background:#ebebeb"></div><div class="a" style="left:973.5px;top:400px;width:1px;height:3px;background:#ebebeb"></div><div class="a" style="left:988.2px;top:400px;width:1px;height:3px;background:#ebebeb"></div><div class="a" style="left:1002.9px;top:400px;width:1px;height:3px;background:#ebebeb"></div><div class="a" style="left:1017.5px;top:400px;width:1px;height:5px;background:#e4e4e4"></div>
<div class="a" style="left:286px;top:443px;width:730px;height:33px;border-radius:6px 6px 0 0;overflow:hidden;background:#3a3470"><svg width="730" height="33" viewBox="0 0 730 33"><defs><filter id="fsb2" x="0" y="0" width="100%" height="100%"><feGaussianBlur stdDeviation="0.5"/></filter></defs><g filter="url(#fsb2)"><use href="#vidg" transform="translate(-2.00,0) scale(0.1217)"/><use href="#vidg" transform="translate(18.45,0) scale(0.1217)"/><use href="#vidg" transform="translate(38.89,0) scale(0.1217)"/><use href="#vidg" transform="translate(59.34,0) scale(0.1217)"/><use href="#vidg" transform="translate(79.78,0) scale(0.1217)"/><use href="#vidg" transform="translate(100.23,0) scale(0.1217)"/><use href="#vidg" transform="translate(120.67,0) scale(0.1217)"/><use href="#vidg" transform="translate(141.12,0) scale(0.1217)"/><use href="#vidg" transform="translate(161.56,0) scale(0.1217)"/><use href="#vidg" transform="translate(182.01,0) scale(0.1217)"/><use href="#vidg" transform="translate(202.46,0) scale(0.1217)"/><use href="#vidg" transform="translate(222.90,0) scale(0.1217)"/><use href="#vidg" transform="translate(243.35,0) scale(0.1217)"/><use href="#vidg" transform="translate(263.79,0) scale(0.1217)"/><use href="#vidg" transform="translate(284.24,0) scale(0.1217)"/><use href="#vidg" transform="translate(304.68,0) scale(0.1217)"/><use href="#vidg" transform="translate(325.13,0) scale(0.1217)"/><use href="#vidg" transform="translate(345.58,0) scale(0.1217)"/><use href="#vidg" transform="translate(366.02,0) scale(0.1217)"/><use href="#vidg" transform="translate(386.47,0) scale(0.1217)"/><use href="#vidg" transform="translate(406.91,0) scale(0.1217)"/><use href="#vidg" transform="translate(427.36,0) scale(0.1217)"/><use href="#vidg" transform="translate(447.80,0) scale(0.1217)"/><use href="#vidg" transform="translate(468.25,0) scale(0.1217)"/><use href="#vidg" transform="translate(488.69,0) scale(0.1217)"/><use href="#vidg" transform="translate(509.14,0) scale(0.1217)"/><use href="#vidg" transform="translate(529.59,0) scale(0.1217)"/><use href="#vidg" transform="translate(550.03,0) scale(0.1217)"/><use href="#vidg" transform="translate(570.48,0) scale(0.1217)"/><use href="#vidg" transform="translate(590.92,0) scale(0.1217)"/><use href="#vidg" transform="translate(611.37,0) scale(0.1217)"/><use href="#vidg" transform="translate(631.81,0) scale(0.1217)"/><use href="#vidg" transform="translate(652.26,0) scale(0.1217)"/><use href="#vidg" transform="translate(672.70,0) scale(0.1217)"/><use href="#vidg" transform="translate(693.15,0) scale(0.1217)"/><use href="#vidg" transform="translate(713.60,0) scale(0.1217)"/></g><rect width="730" height="33" fill="#301838" opacity="0.12"/></svg></div>
<div class="a" style="left:290px;top:446px;width:9px;height:9px;border-radius:4.5px;background:rgba(20,20,20,0.75)"></div><div class="t" style="left:292.5px;top:447px;font-size:7.5px;font-weight:700;color:#fff">1</div>
<div class="a" style="left:284.8px;top:408px;width:1.6px;height:68px;background:#ee6a46"></div><svg class="a" style="left:280.5px;top:398.5px" width="10" height="12" viewBox="0 0 10 12"><path d="M1.2 1H8.8V6.8Q8.8 10 5 11Q1.2 10 1.2 6.8Z" fill="#fff" stroke="#e8684a" stroke-width="1.8" stroke-linejoin="round"/></svg>
<div class="t" style="left:839px;top:433px;font-size:15.5px;color:rgba(150,150,150,0.55)">Activate Windows</div>
<div class="t" style="left:870px;top:452px;font-size:10.5px;color:rgba(150,150,150,0.45)">Go to Settings to activate Windows.</div>



</body></html>
